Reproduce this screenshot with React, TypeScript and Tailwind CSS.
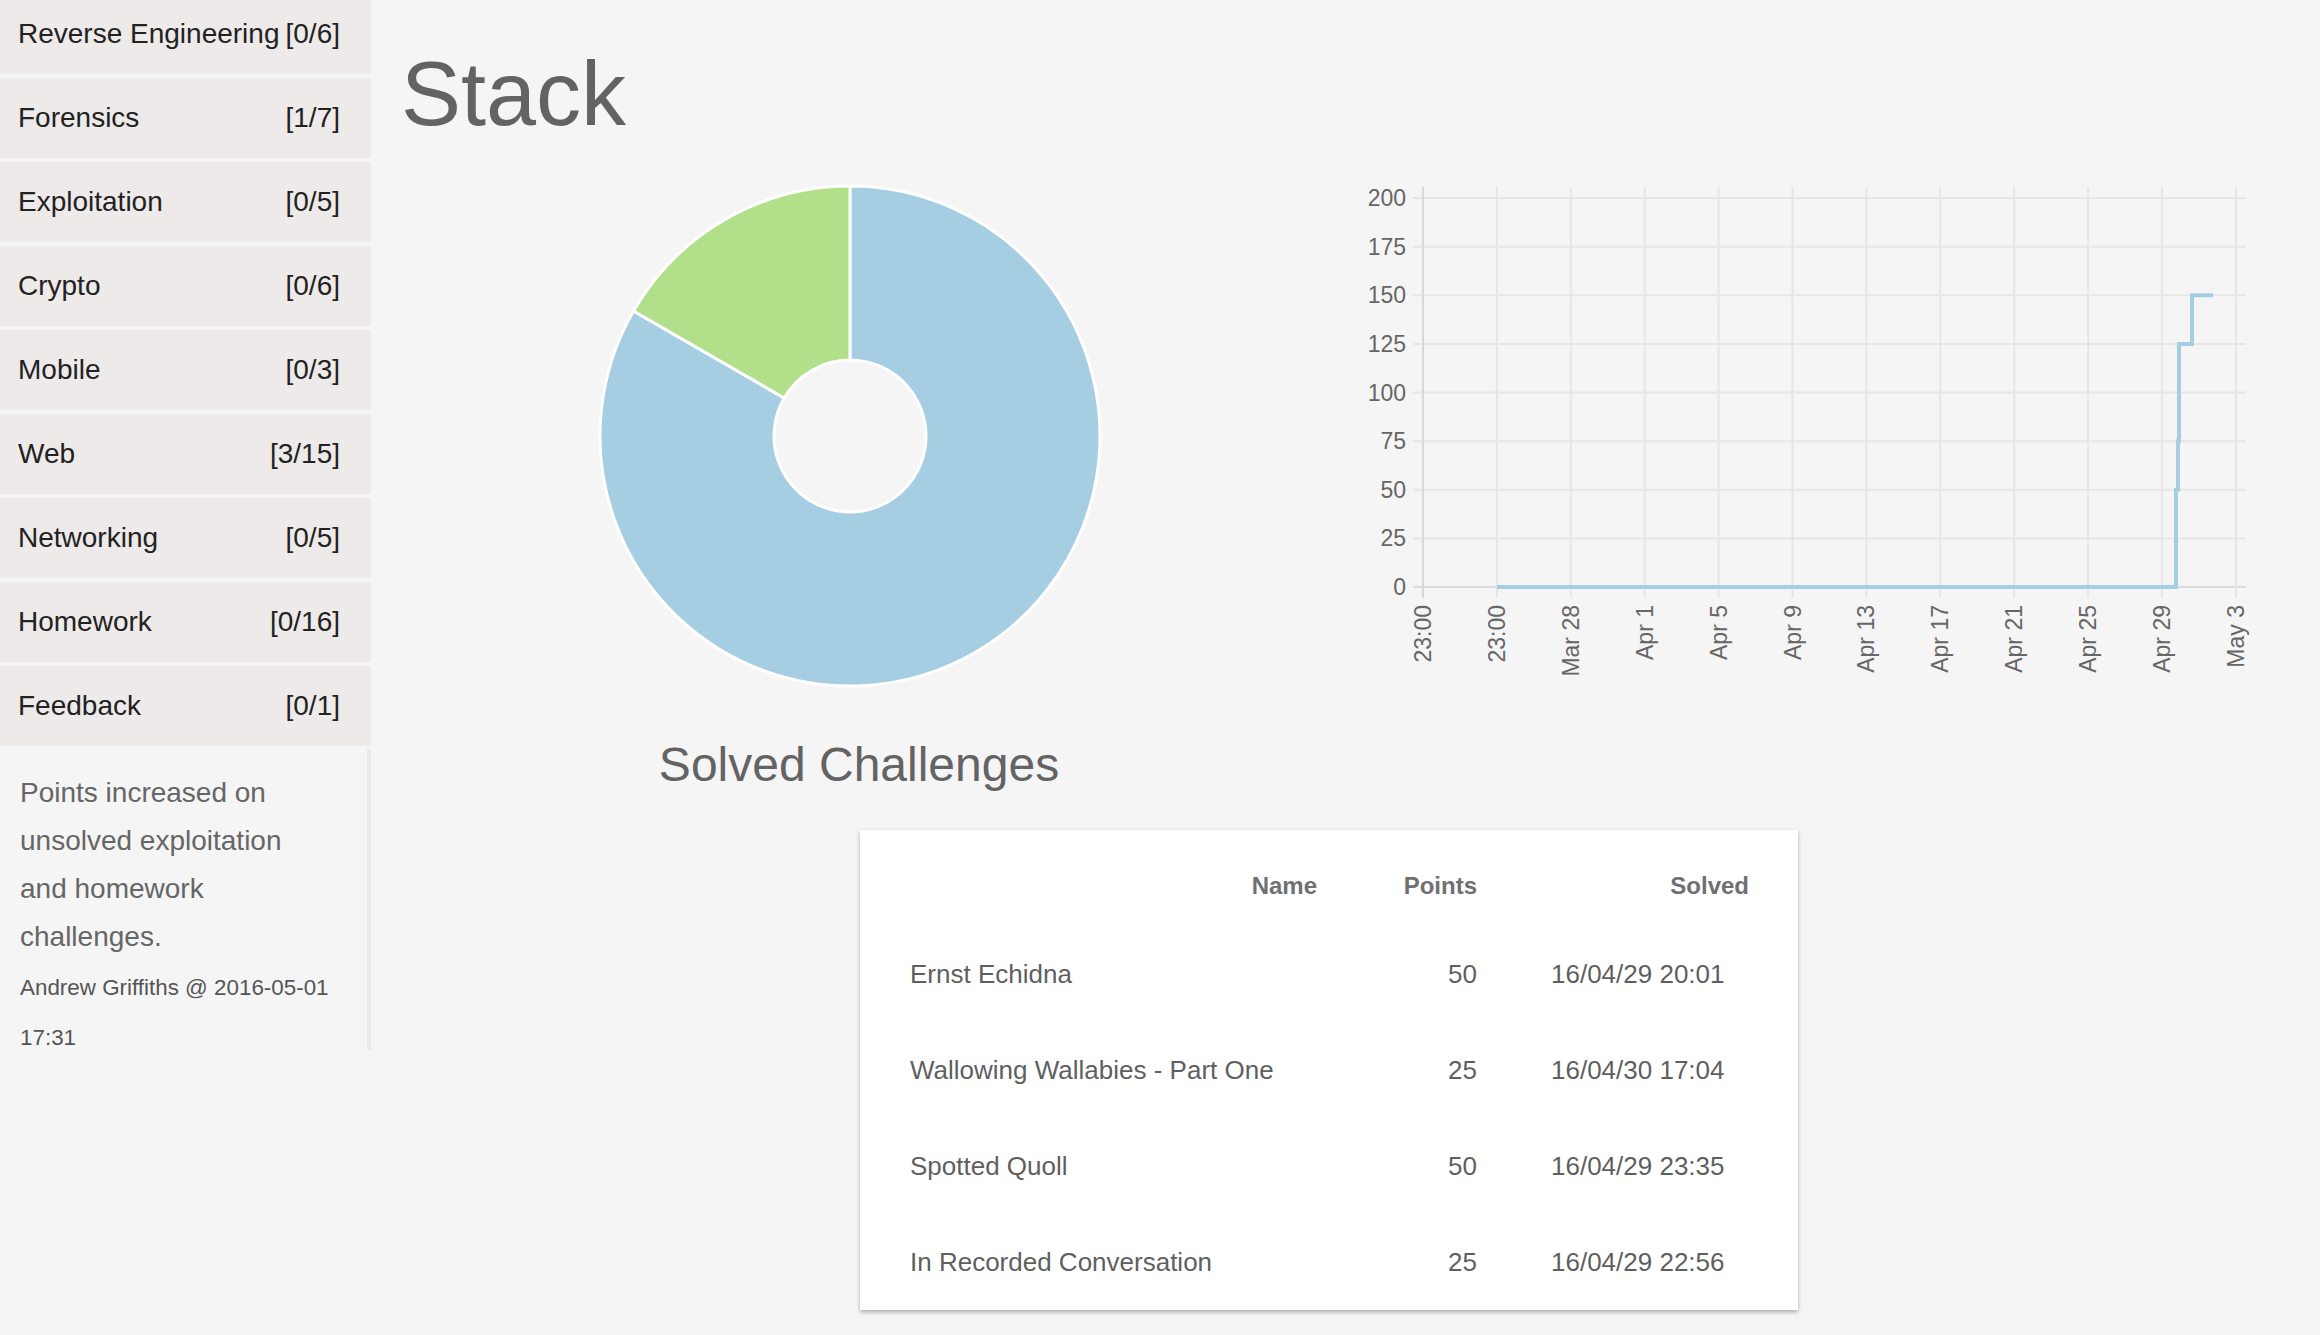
import React from "react";

const categories: [string, string][] = [
  ["Reverse Engineering", "[0/6]"],
  ["Forensics", "[1/7]"],
  ["Exploitation", "[0/5]"],
  ["Crypto", "[0/6]"],
  ["Mobile", "[0/3]"],
  ["Web", "[3/15]"],
  ["Networking", "[0/5]"],
  ["Homework", "[0/16]"],
  ["Feedback", "[0/1]"],
];

const rows: [string, string, string][] = [
  ["Ernst Echidna", "50", "16/04/29 20:01"],
  ["Wallowing Wallabies - Part One", "25", "16/04/30 17:04"],
  ["Spotted Quoll", "50", "16/04/29 23:35"],
  ["In Recorded Conversation", "25", "16/04/29 22:56"],
];

const xLabels = ["23:00", "23:00", "Mar 28", "Apr 1", "Apr 5", "Apr 9", "Apr 13", "Apr 17", "Apr 21", "Apr 25", "Apr 29", "May 3"];
const yVals = [200, 175, 150, 125, 100, 75, 50, 25, 0];

function yOf(v: number) {
  return 587 - v * 1.945;
}

function Donut() {
  return (
    <svg width="520" height="520" viewBox="0 0 520 520">
      <path
        d="M 260 10 A 250 250 0 1 1 43.5 135 L 194.2 222 A 76 76 0 1 0 260 184 Z"
        fill="#a6cee3"
        stroke="#ffffff"
        strokeWidth="3"
        strokeLinejoin="round"
      />
      <path
        d="M 43.5 135 A 250 250 0 0 1 260 10 L 260 184 A 76 76 0 0 0 194.2 222 Z"
        fill="#b2df8a"
        stroke="#ffffff"
        strokeWidth="3"
        strokeLinejoin="round"
      />
    </svg>
  );
}

function LineChart() {
  const xs = xLabels.map((_, i) => 1423 + i * 73.9);
  const line = [
    [1497, yOf(0)],
    [2176, yOf(0)],
    [2176, yOf(50)],
    [2178, yOf(50)],
    [2178, yOf(75)],
    [2179, yOf(75)],
    [2179, yOf(125)],
    [2192, yOf(125)],
    [2192, yOf(150)],
    [2213, yOf(150)],
  ]
    .map((p) => p.join(","))
    .join(" ");
  return (
    <svg width="915" height="520" viewBox="1345 176 915 520">
      {yVals.map((v) => (
        <line
          key={"h" + v}
          x1={1413}
          x2={2246}
          y1={yOf(v)}
          y2={yOf(v)}
          stroke={v === 0 ? "#dcdcdc" : "#e6e6e6"}
          strokeWidth="2"
        />
      ))}
      {xs.map((x, i) => (
        <line
          key={"v" + i}
          x1={x}
          x2={x}
          y1={187}
          y2={598}
          stroke={i === 0 ? "#d8d8d8" : "#e6e6e6"}
          strokeWidth="2"
        />
      ))}
      {yVals.map((v) => (
        <text
          key={"yl" + v}
          x={1406}
          y={yOf(v)}
          textAnchor="end"
          dominantBaseline="central"
          fontSize="23"
          fill="#666666"
          fontFamily="'Liberation Sans', Arial, sans-serif"
        >
          {v}
        </text>
      ))}
      {xLabels.map((l, i) => (
        <text
          key={"xl" + i}
          transform={`translate(${xs[i] + 8}, 605) rotate(-90)`}
          textAnchor="end"
          fontSize="23"
          fill="#666666"
          fontFamily="'Liberation Sans', Arial, sans-serif"
        >
          {l}
        </text>
      ))}
      <polyline points={line} fill="none" stroke="#a6cee3" strokeWidth="4" />
    </svg>
  );
}

export default function App() {
  return (
    <div className="flex min-h-screen w-full overflow-hidden bg-[#f5f5f5] font-[family-name:Liberation_Sans,Arial,sans-serif]">
      <aside className="w-[371px] shrink-0 -mt-[6px] flex flex-col">
        {categories.map(([name, count]) => (
          <div
            key={name}
            className="h-[80px] mb-[4px] flex items-center justify-between bg-[#edeae9] pl-[18px] pr-[31px] text-[28px] text-[#222222]"
          >
            <span>{name}</span>
            <span>{count}</span>
          </div>
        ))}
        <div className="h-[301px] -mt-[1px] border-r-4 border-[#ece8e7] pl-[20px] pt-[20px]">
          <div className="w-[314px]">
            <p className="text-[28px] leading-[48px] text-[#666666]">
              Points increased on unsolved exploitation and homework challenges.
            </p>
            <p className="mt-[2px] text-[22.4px] leading-[50px] text-[#555555]">
              Andrew Griffiths @ 2016-05-01 17:31
            </p>
          </div>
        </div>
      </aside>
      <main className="flex-1 pl-[30px]">
        <h1 className="mt-[48px] text-[90px] leading-[92px] text-[#636363]">Stack</h1>
        <div className="mt-[36px] flex">
          <div className="w-[944px] shrink-0">
            <div className="ml-[189px] w-[520px]">
              <Donut />
              <div className="mt-[42px] pl-[18px] text-center text-[48px] leading-[54px] text-[#636363]">
                Solved Challenges
              </div>
            </div>
          </div>
          <div className="shrink-0">
            <LineChart />
          </div>
        </div>
        <div className="mt-[38px] ml-[459px] w-[938px] bg-white pl-[50px] pr-[49px] shadow-[0_2px_4px_rgba(0,0,0,0.3)]">
          <div className="h-[96px] pt-[16px] flex items-center text-[24px] font-bold text-[#707070]">
            <div className="w-[407px] text-right">Name</div>
            <div className="w-[160px] text-right">Points</div>
            <div className="w-[272px] text-right">Solved</div>
          </div>
          {rows.map(([n, p, s]) => (
            <div key={n} className="h-[96px] flex items-center text-[26px] text-[#5f5f5f]">
              <div className="w-[407px]">{n}</div>
              <div className="w-[160px] text-right">{p}</div>
              <div className="w-[272px] pl-[74px]">{s}</div>
            </div>
          ))}
        </div>
      </main>
    </div>
  );
}
